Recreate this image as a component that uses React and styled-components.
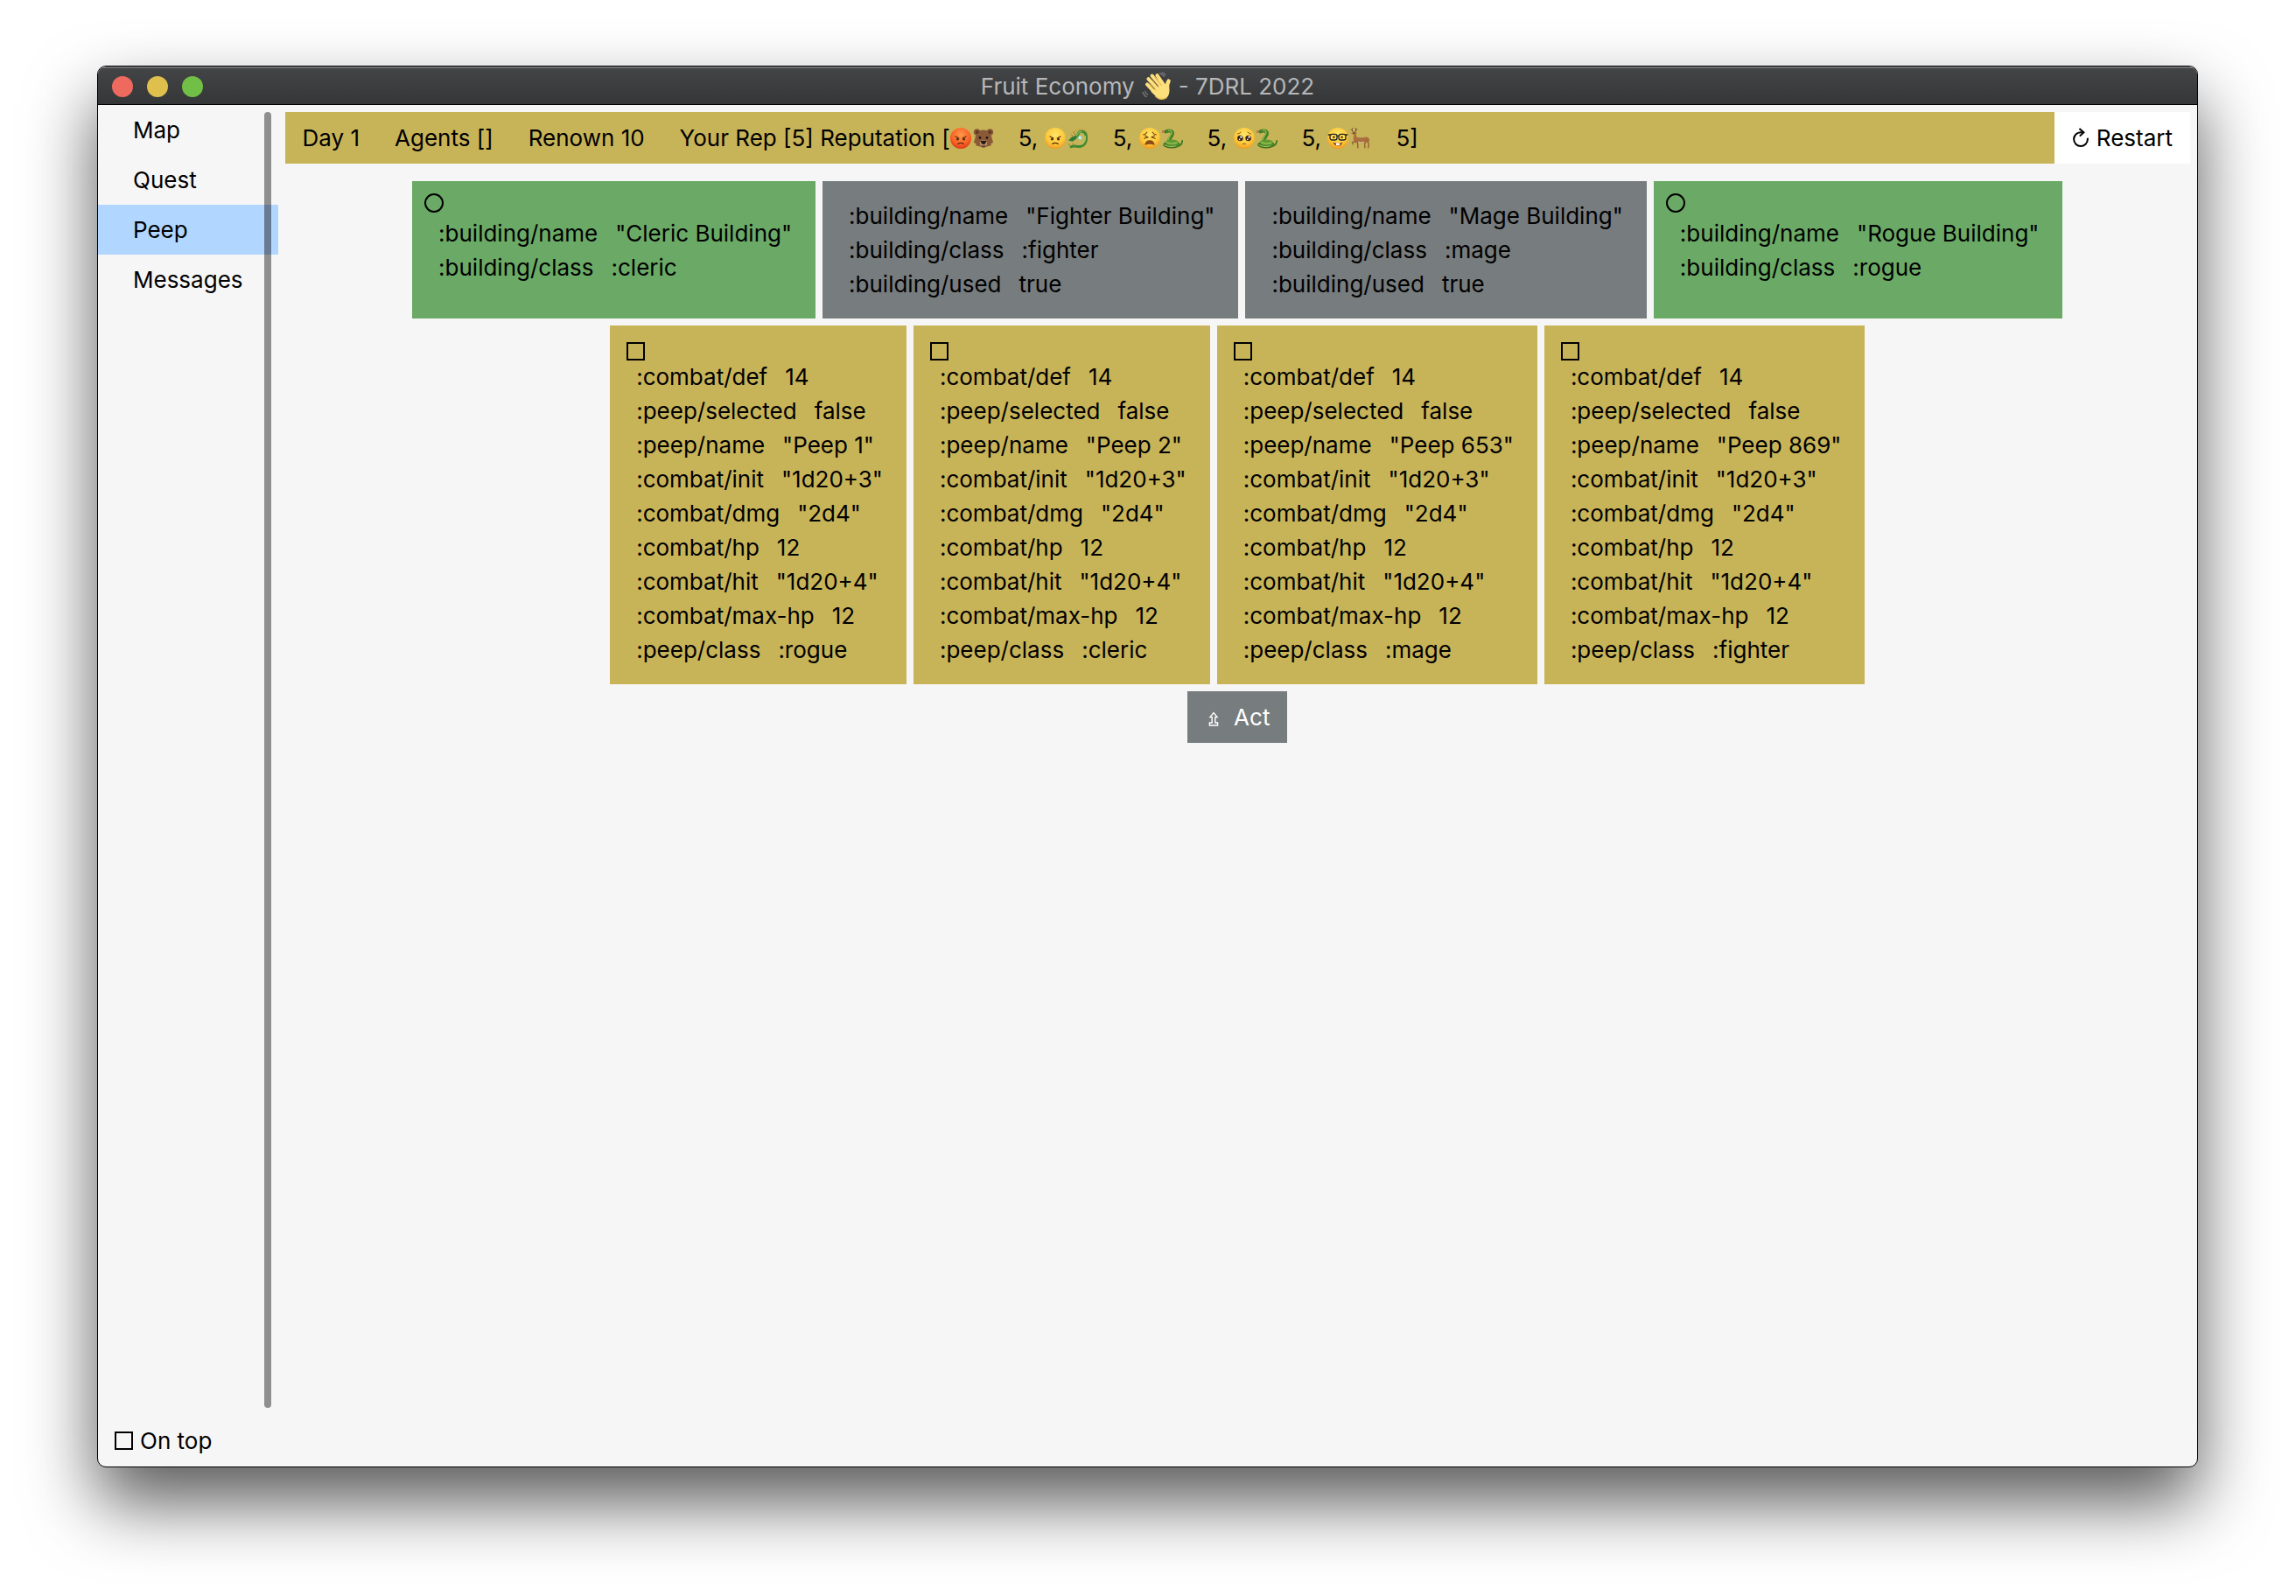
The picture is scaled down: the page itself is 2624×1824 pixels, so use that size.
import React, { useState } from "react";
import styled, { createGlobalStyle, css } from "styled-components";

const GlobalStyle = createGlobalStyle`
  *, *::before, *::after { box-sizing: border-box; }
  body {
    margin: 0;
    background: #fff;
    color: #000;
    font: 26px/39px Inter, "Liberation Sans", sans-serif;
  }
  button, input { font: inherit; color: inherit; margin: 0; }
`;

const colors = {
  gold: "#c8b458",
  green: "#6baa66",
  gray: "#777c7e",
  page: "#f6f6f6",
};

const Desktop = styled.div`
  display: flex;
  min-height: 100vh;
  padding: 75px 112px 147px 111px;
`;

const Window = styled.div`
  flex: 1;
  display: flex;
  flex-direction: column;
  overflow: hidden;
  border: 1px solid #000;
  border-radius: 10px;
  background: ${colors.page};
  box-shadow: 0 40px 80px rgba(0, 0, 0, 0.65);
`;

const TitleBar = styled.header`
  display: grid;
  grid-template-columns: 1fr auto 1fr;
  align-items: center;
  height: 44px;
  padding: 0 16px;
  border-top: 2px solid #6e6e70;
  border-bottom: 1px solid #000;
  background: linear-gradient(#434446, #353638);
`;

const Lights = styled.div`
  display: flex;
  gap: 16px;
`;

const Light = styled.button`
  width: 24px;
  height: 24px;
  padding: 0;
  border: 0;
  border-radius: 50%;
  background: ${(p) => p.$color};
`;

const Title = styled.h1`
  display: flex;
  align-items: center;
  gap: 8px;
  margin: 0;
  color: #b6b7b8;
  font-size: 26px;
  font-weight: 400;
  line-height: 39px;
`;

const Body = styled.div`
  flex: 1;
  display: flex;
`;

const Sidebar = styled.aside`
  display: flex;
  flex-direction: column;
  flex: 0 0 205px;
`;

const Nav = styled.nav`
  position: relative;
  flex: 1;
  display: flex;
  flex-direction: column;
`;

const NavItem = styled.button`
  padding: 9px 40px;
  border: 0;
  text-align: left;
  background: ${(p) => (p.$active ? "#b1d6ff" : "transparent")};
`;

const ScrollThumb = styled.div`
  position: absolute;
  top: 8px;
  right: 8px;
  bottom: 8px;
  width: 8px;
  border-radius: 4px;
  background: rgba(0, 0, 0, 0.42);
`;

const OnTop = styled.label`
  display: flex;
  align-items: center;
  gap: 8px;
  padding: 10px 19px;
`;

const outline = css`
  appearance: none;
  flex: none;
  border: 2px solid #000;
  background: transparent;
`;

const CheckBox = styled.input.attrs({ type: "checkbox" })`
  ${outline}
  width: 21px;
  height: 21px;
  &:checked { background: #000; }
`;

const Radio = styled.input.attrs({ type: "radio" })`
  ${outline}
  width: 22px;
  height: 22px;
  border-radius: 50%;
  &:checked { background: #000; }
`;

const Main = styled.main`
  flex: 1;
  display: flex;
  flex-direction: column;
  align-items: center;
  gap: 8px;
  padding: 8px;
`;

const TopBar = styled.div`
  align-self: stretch;
  display: flex;
  margin-bottom: 12px;
`;

const Stats = styled.div`
  flex: 1;
  display: flex;
  align-items: center;
  gap: 40px;
  padding: 10px 20px;
  background: ${colors.gold};
`;

const Stat = styled.span`
  display: flex;
  align-items: center;
  white-space: pre;
`;

const Faction = styled.span`
  display: flex;
  align-items: center;
  gap: 2px;
  padding-right: 28px;
`;

const Action = styled.button`
  display: flex;
  align-items: center;
  gap: ${(p) => (p.$solid ? 13 : 8)}px;
  padding: 10px 20px;
  border: 0;
  color: ${(p) => (p.$solid ? "#fff" : "#000")};
  background: ${(p) => (p.$solid ? colors.gray : "#fff")};
`;

const CardRow = styled.section`
  display: flex;
  justify-content: center;
  gap: 8px;
`;

const Card = styled.label`
  display: flex;
  flex-direction: column;
  background: ${(p) => p.$color};
`;

const BuildingHead = styled.span`
  display: flex;
  height: 40px;
  padding: 14px 14px 0;
`;

const PeepHead = styled.span`
  display: flex;
  height: 39px;
  padding: 19px 19px 0;
`;

const Entries = styled.span`
  display: flex;
  flex-direction: column;
  padding: ${(p) => (p.$headless ? 20 : 0)}px 27px 20px 30px;
`;

const Entry = styled.span`
  display: flex;
  gap: 20px;
  white-space: nowrap;
`;

const Icon = styled.svg`
  flex: none;
  display: block;
  width: ${(p) => p.$w || 24}px;
  height: ${(p) => p.$h || 24}px;
`;

const Face = ({ red, name, children }) => (
  <Icon viewBox="0 0 24 24" role="img" aria-label={name}>
    <defs>
      <radialGradient id={`skin-${name}`} cx="50%" cy="35%" r="65%">
        <stop offset="0" stopColor={red ? "#ff9a4a" : "#ffe668"} />
        <stop offset="0.65" stopColor={red ? "#fa6428" : "#fdc93a"} />
        <stop offset="1" stopColor={red ? "#dd3818" : "#ee9a20"} />
      </radialGradient>
    </defs>
    <circle cx="12" cy="12" r="12" fill={`url(#skin-${name})`} />
    {children}
  </Icon>
);

const Angry = ({ red }) => (
  <Face red={red} name={red ? "enraged" : "angry"}>
    <g stroke="#5c2a0c" fill="none" strokeLinecap="round" strokeWidth="1.3">
      <path d="M6 10l3.8 2M18 10l-3.800 2" />
      <path d="M8.800 18.400q3.200-2.200 6.400 0" />
    </g>
    <circle cx="8.400" cy="13.200" r="1.400" fill="#5c2a0c" />
    <circle cx="15.600" cy="13.200" r="1.400" fill="#5c2a0c" />
  </Face>
);

const Weary = () => (
  <Face name="weary">
    <g stroke="#6a3a10" fill="none" strokeLinecap="round" strokeWidth="1.1">
      <path d="M4.600 8q2.800-.6 4.200-2.800M19.400 8q-2.800-.6-4.200-2.800" />
      <path d="M6.400 9l3.400 1.800-4.200 1.400M17.600 9l-3.400 1.800 4.200 1.400" />
    </g>
    <path d="M6.400 20q.4-5.800 5.600-5.800t5.600 5.800q-5.600-2.600-11.200 0z" fill="#8a4a1a" />
  </Face>
);

const Pleading = () => (
  <Face name="pleading">
    <circle cx="7.400" cy="12" r="3.300" fill="#3a2417" />
    <circle cx="16.600" cy="12" r="3.300" fill="#3a2417" />
    <g fill="#fff">
      <circle cx="8.400" cy="10.600" r="1.200" />
      <circle cx="17.600" cy="10.600" r="1.200" />
      <circle cx="6.600" cy="13.400" r=".8" />
      <circle cx="15.800" cy="13.400" r=".8" />
    </g>
    <g stroke="#8a5216" fill="none" strokeLinecap="round" strokeWidth="1">
      <path d="M4.600 7q2-.4 3.400-1.800M19.400 7q-2-.4-3.400-1.800M10.200 18.600q1.800-1.200 3.600 0" />
    </g>
  </Face>
);

const Nerd = () => (
  <Face name="nerd">
    <g fill="#ffdf52" stroke="#222" strokeWidth="1.300">
      <rect x="3" y="7.400" width="8" height="6.600" rx="2.600" />
      <rect x="13" y="7.400" width="8" height="6.600" rx="2.600" />
      <path d="M.8 8h2.600M20.600 8h2.600M11 9.400h2" />
    </g>
    <circle cx="7.400" cy="10.800" r="1.300" fill="#5c3010" />
    <circle cx="16.600" cy="10.800" r="1.300" fill="#5c3010" />
    <path d="M6.400 16.400q5.600 2.400 11.200 0-1.600 4.200-5.600 4.200t-5.600-4.200z" fill="#8a4a1a" />
    <path d="M10 17.600h4v2.400h-4z" fill="#fff" />
  </Face>
);

const Bear = () => (
  <Icon viewBox="0 0 24 24" role="img" aria-label="bear">
    <g fill="#8a5a38">
      <circle cx="4.600" cy="5" r="3.800" />
      <circle cx="19.400" cy="5" r="3.800" />
      <path d="M12 2.600c6 0 9 4.400 9.600 9.400l1.600 5-2.200.8-.6 2.600-2.800.6L12 23l-5.600-2-2.800-.6L3 17.800l-2.200-.8 1.600-5C3 7 6 2.600 12 2.600z" />
    </g>
    <circle cx="4.600" cy="5" r="2" fill="#5f3a22" />
    <circle cx="19.400" cy="5" r="2" fill="#5f3a22" />
    <ellipse cx="12" cy="18" rx="4.200" ry="3.800" fill="#b98f68" />
    <path d="M8.800 15h6.400q-.6 4-3.200 4t-3.200-4z" fill="#251913" />
    <path d="M9.600 20.600q2.400 1.600 4.800 0" stroke="#3a2417" fill="none" />
    <circle cx="8" cy="11.400" r="1.300" fill="#1c120c" />
    <circle cx="16" cy="11.400" r="1.300" fill="#1c120c" />
  </Icon>
);

const Dragon = () => (
  <Icon viewBox="0 0 24 24" role="img" aria-label="dragon">
    <path d="M8 4.600q9-7 14 1.400c2.600 8-1 15.600-8 16.800" fill="none" stroke="#c9963a" strokeWidth="1.400" strokeDasharray="1.600 1.400" />
    <path d="M6 12.600q4-1 6-5.200c2-4.600 7.800-4 9.200 1.200 1.200 7-1.400 11.600-6.400 12.800-4.600.8-6.800-1.800-10.800.4" fill="none" stroke="#3f8a32" strokeWidth="3" strokeLinecap="round" />
    <path d="M7 11.600q3.400-1.200 4.600-4.400 1.400-3 4.600-2.600M20.400 9q1 7-3.800 10.400" fill="none" stroke="#a5d36a" strokeWidth="1" />
    <path d="M1 14.600L5 10.400l5-1.400 0 3.800L5.600 15.800z" fill="#2f7a34" />
    <path d="M7 10.600L4 7.600M9 8.600L6.600 4.600M3 20l-2-1.600M7 20.600l-1-3" stroke="#9c7a33" strokeWidth="1" />
    <circle cx="14.400" cy="11.600" r="2.200" fill="#7fe3e6" />
    <circle cx="14.200" cy="11.400" r="1.100" fill="#fff" />
  </Icon>
);

const Snake = () => (
  <Icon viewBox="0 0 24 24" role="img" aria-label="snake">
    <path d="M0 5.400l3-.8M0 3.600l3 1" stroke="#c2453a" strokeWidth=".8" />
    <path d="M4.400 4.400c4.600-2.200 8.400-.4 7.400 3.200-1.200 3.400-4.600 5.400-3.600 8.200" fill="none" stroke="#447f26" strokeWidth="4" strokeLinecap="round" />
    <path d="M5 3.800c3.600-1.600 6.600-.4 6 2.600-1 3-4 5-3.800 7.600" fill="none" stroke="#8dbb4a" strokeWidth="1.300" />
    <ellipse cx="11" cy="19.400" rx="9.800" ry="4.200" fill="#3a6e22" />
    <ellipse cx="11.400" cy="17" rx="7.600" ry="3.400" fill="#5f9a32" />
    <path d="M2.600 19.400q7 4 16 .4M5 16.600q5.600 3.200 12.400.4" fill="none" stroke="#b3cf60" strokeWidth="1" />
    <path d="M17 21q5.800-.4 6.200-6" fill="none" stroke="#447f26" strokeWidth="2" strokeLinecap="round" />
    <circle cx="6" cy="3.600" r=".7" fill="#20300f" />
  </Icon>
);

const Deer = () => (
  <Icon viewBox="0 0 24 24" role="img" aria-label="deer">
    <path d="M3.800 5Q.6 3 2.800.4M5.600 5q2.200-2 .6-4.600M1.600 2.800l-1-1M6.600 2.600l1.600-.8" fill="none" stroke="#6b4a33" strokeWidth="1" />
    <path d="M1 6.600L4 4.600l4 1.200-1.200 1.200.6 3.800q6 1.200 11.400-.2 3 .6 3.400 4l-1.400 1.400-3.400 1.400-8-.4-4 .4L3.600 13l.8-5.200z" fill="#a9703f" />
    <path d="M6.600 15.600l-4.200.8 1 3M8.600 16l.2 7.400M17.400 15.600l-.8 3.600.4 4.200M19.800 14l1.400 4.800-.6 4.600" fill="none" stroke="#94602f" strokeWidth="1.400" strokeLinejoin="round" />
    <path d="M9 16.400q4 1 7.400 0" stroke="#e3c7a0" fill="none" />
    <circle cx="4.400" cy="6.200" r=".6" fill="#20130a" />
  </Icon>
);

const Wave = () => (
  <Icon $w={34} $h={34} viewBox="0 0 34 34" role="img" aria-label="waving hand">
    <g fill="none" stroke="#fde07c" strokeLinecap="round" strokeWidth="4">
      <path d="M6 14.400l9 9.600M7.400 8.200l11 12M11.600 4.600l10.400 12M17.400 4.200l7.600 11" />
      <path d="M30.600 10.600q-2.400 4-1.400 9.400" strokeWidth="4.400" />
    </g>
    <path d="M13 21l11-8.400 4.600 3.200 2.800 4.200q.6 6.600-3.400 10-5 3.400-9.800.2l-8-7.600z" fill="#fde07c" />
    <path d="M8.600 13.400l7.600 8.200M11 8.800l8.400 9.400M15 6.600l7.600 9.200" stroke="#d9a441" strokeWidth=".9" fill="none" />
    <path d="M15 27.600q6 6.400 13.600 2" stroke="#e6b34c" fill="none" strokeWidth="1.200" />
    <path d="M20 1.600q3.600.6 5.600 4M22.800.6q3 1 4.600 3.800M1 23q1 4 4.600 6M3.400 22q1 3 3.600 4.600" stroke="#77797b" strokeWidth="1.200" fill="none" />
  </Icon>
);

const RestartIcon = () => (
  <Icon $w={20} viewBox="0 0 20 24" aria-hidden="true">
    <path d="M11.800 5.200H10a7.900 7.900 0 1 0 7.900 7.900v-1.300" fill="none" stroke="#000" strokeWidth="2" />
    <path d="M8.400 1l5 4.200-4.600 4.400" fill="none" stroke="#000" strokeWidth="2" />
  </Icon>
);

const ActIcon = () => (
  <Icon $w={20} viewBox="-4 0 20 24" aria-hidden="true">
    <path d="M6 6.600L2 11.600h2.200v6.400H1.400v3h9.200v-3H7.800v-6.400H10z" fill="none" stroke="#fff" strokeWidth="1.400" />
  </Icon>
);

const factions = [
  [<Angry red />, <Bear />],
  [<Angry />, <Dragon />],
  [<Weary />, <Snake />],
  [<Pleading />, <Snake />],
  [<Nerd />, <Deer />],
];

const buildings = [
  { name: "Cleric Building", cls: "cleric" },
  { name: "Fighter Building", cls: "fighter", used: true },
  { name: "Mage Building", cls: "mage", used: true },
  { name: "Rogue Building", cls: "rogue" },
];

const peeps = [
  { name: "Peep 1", cls: "rogue" },
  { name: "Peep 2", cls: "cleric" },
  { name: "Peep 653", cls: "mage" },
  { name: "Peep 869", cls: "fighter" },
];

const buildingEntries = (b) => [
  [":building/name", `"${b.name}"`],
  [":building/class", `:${b.cls}`],
  ...(b.used ? [[":building/used", "true"]] : []),
];

const peepEntries = (p) => [
  [":combat/def", "14"],
  [":peep/selected", "false"],
  [":peep/name", `"${p.name}"`],
  [":combat/init", '"1d20+3"'],
  [":combat/dmg", '"2d4"'],
  [":combat/hp", "12"],
  [":combat/hit", '"1d20+4"'],
  [":combat/max-hp", "12"],
  [":peep/class", `:${p.cls}`],
];

const EntryList = ({ entries, headless }) => (
  <Entries $headless={headless}>
    {entries.map(([key, value]) => (
      <Entry key={key}>
        <span>{key}</span>
        <span>{value}</span>
      </Entry>
    ))}
  </Entries>
);

export default function App() {
  const [tab, setTab] = useState("Peep");
  return (
    <Desktop>
      <GlobalStyle />
      <Window>
        <TitleBar>
          <Lights>
            <Light $color="#ee6a5f" aria-label="Close" />
            <Light $color="#e0c04c" aria-label="Minimize" />
            <Light $color="#72bf47" aria-label="Zoom" />
          </Lights>
          <Title>
            <span>Fruit Economy</span>
            <Wave />
            <span>- 7DRL 2022</span>
          </Title>
        </TitleBar>
        <Body>
          <Sidebar>
            <Nav>
              {["Map", "Quest", "Peep", "Messages"].map((t) => (
                <NavItem key={t} $active={t === tab} onClick={() => setTab(t)}>
                  {t}
                </NavItem>
              ))}
              <ScrollThumb />
            </Nav>
            <OnTop>
              <CheckBox />
              On top
            </OnTop>
          </Sidebar>
          <Main>
            <TopBar>
              <Stats>
                <Stat>Day 1</Stat>
                <Stat>Agents []</Stat>
                <Stat>Renown 10</Stat>
                <Stat>
                  {"Your Rep [5] Reputation ["}
                  {factions.map(([face, animal], i) => (
                    <React.Fragment key={i}>
                      <Faction>
                        {face}
                        {animal}
                      </Faction>
                      {i < factions.length - 1 ? "5, " : "5]"}
                    </React.Fragment>
                  ))}
                </Stat>
              </Stats>
              <Action>
                <RestartIcon />
                Restart
              </Action>
            </TopBar>
            <CardRow>
              {buildings.map((b) => (
                <Card key={b.name} as={b.used ? "div" : "label"} $color={b.used ? colors.gray : colors.green}>
                  {!b.used && (
                    <BuildingHead>
                      <Radio name="building" />
                    </BuildingHead>
                  )}
                  <EntryList entries={buildingEntries(b)} headless={b.used} />
                </Card>
              ))}
            </CardRow>
            <CardRow>
              {peeps.map((p) => (
                <Card key={p.name} $color={colors.gold}>
                  <PeepHead>
                    <CheckBox />
                  </PeepHead>
                  <EntryList entries={peepEntries(p)} />
                </Card>
              ))}
            </CardRow>
            <Action $solid>
              <ActIcon />
              Act
            </Action>
          </Main>
        </Body>
      </Window>
    </Desktop>
  );
}
